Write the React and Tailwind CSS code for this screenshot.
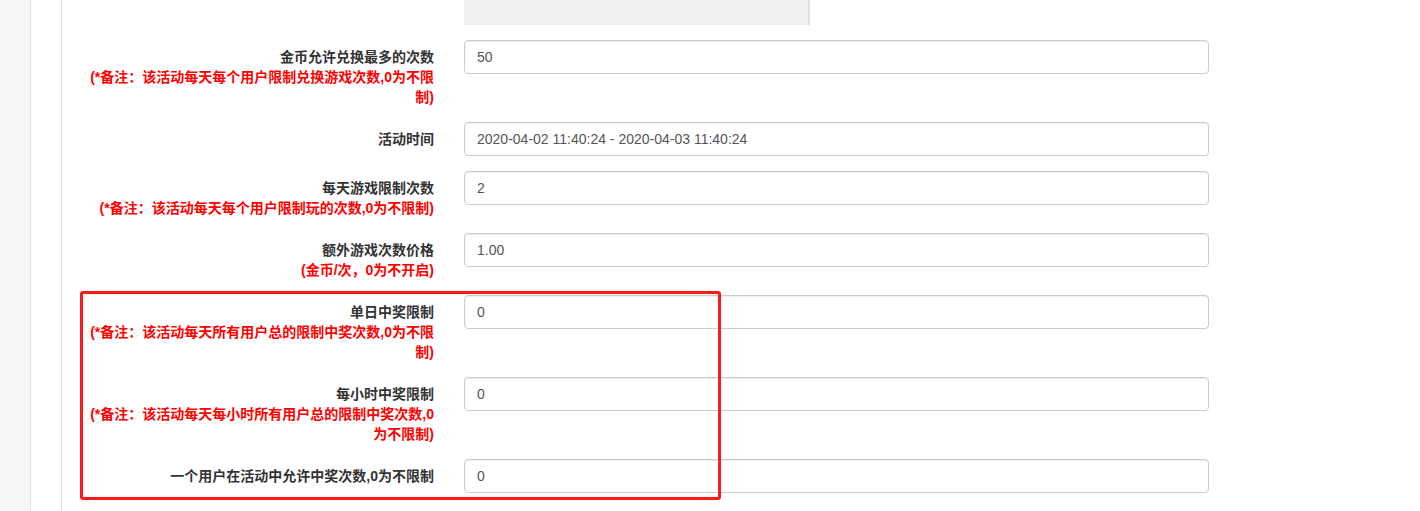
const rows = [
    { label: '金币允许兑换最多的次数', note: '(*备注：该活动每天每个用户限制兑换游戏次数,0为不限制)', value: '50' },
    { label: '活动时间', value: '2020-04-02 11:40:24 - 2020-04-03 11:40:24' },
    { label: '每天游戏限制次数', note: '(*备注：该活动每天每个用户限制玩的次数,0为不限制)', value: '2' },
    { label: '额外游戏次数价格', note: '(金币/次，0为不开启)', value: '1.00' },
    { label: '单日中奖限制', note: '(*备注：该活动每天所有用户总的限制中奖次数,0为不限制)', value: '0' },
    { label: '每小时中奖限制', note: '(*备注：该活动每天每小时所有用户总的限制中奖次数,0为不限制)', value: '0' },
    { label: '一个用户在活动中允许中奖次数,0为不限制', value: '0' },
];

const FormRow = ({ label, note, value }) => (
    <div className="flex items-start mb-[15px]">
        <div className="w-[365px] pr-[15px] pt-[7px] text-right text-[14px] leading-[20px] font-bold">
            <div className="text-[#333]">{label}</div>
            {note && <div className="text-[#ff0000]">{note}</div>}
        </div>
        <div className="pl-[15px]">
            <div className="w-[745px] h-[34px] flex items-center px-3 border border-[#ccc] rounded-[4px] bg-white shadow-[inset_0_1px_1px_rgba(0,0,0,0.075)] text-[14px] text-[#555] font-['Liberation_Sans',Arial,sans-serif]">
                {value}
            </div>
        </div>
    </div>
);

export default function App() {
    return (
        <div className="relative flex h-[511px] overflow-hidden bg-white font-['Liberation_Sans','Noto_Sans_CJK_SC',sans-serif]">
            {/* side rails */}
            <div className="w-[31px] shrink-0 bg-[#f7f7f7] border-r border-[#e3e3e3]" />
            <div className="w-[31px] shrink-0 bg-white border-r border-[#e3e3e3]" />

            {/* form */}
            <div className="flex-1 pl-[22px]">
                <div className="flex mb-[15px]">
                    <div className="w-[365px]" />
                    <div className="pl-[15px]">
                        <div className="w-[346px] h-[25px] bg-[#f1f1f1] border-r-2 border-[#e2e2e2]" />
                    </div>
                </div>
                {rows.map((r) => (
                    <FormRow key={r.label} {...r} />
                ))}
            </div>

            {/* highlight annotation */}
            <div className="absolute left-[80px] top-[291px] w-[641px] h-[209px] border-[3px] border-[#ff1a1a] rounded-[3px] pointer-events-none" />
        </div>
    );
}
